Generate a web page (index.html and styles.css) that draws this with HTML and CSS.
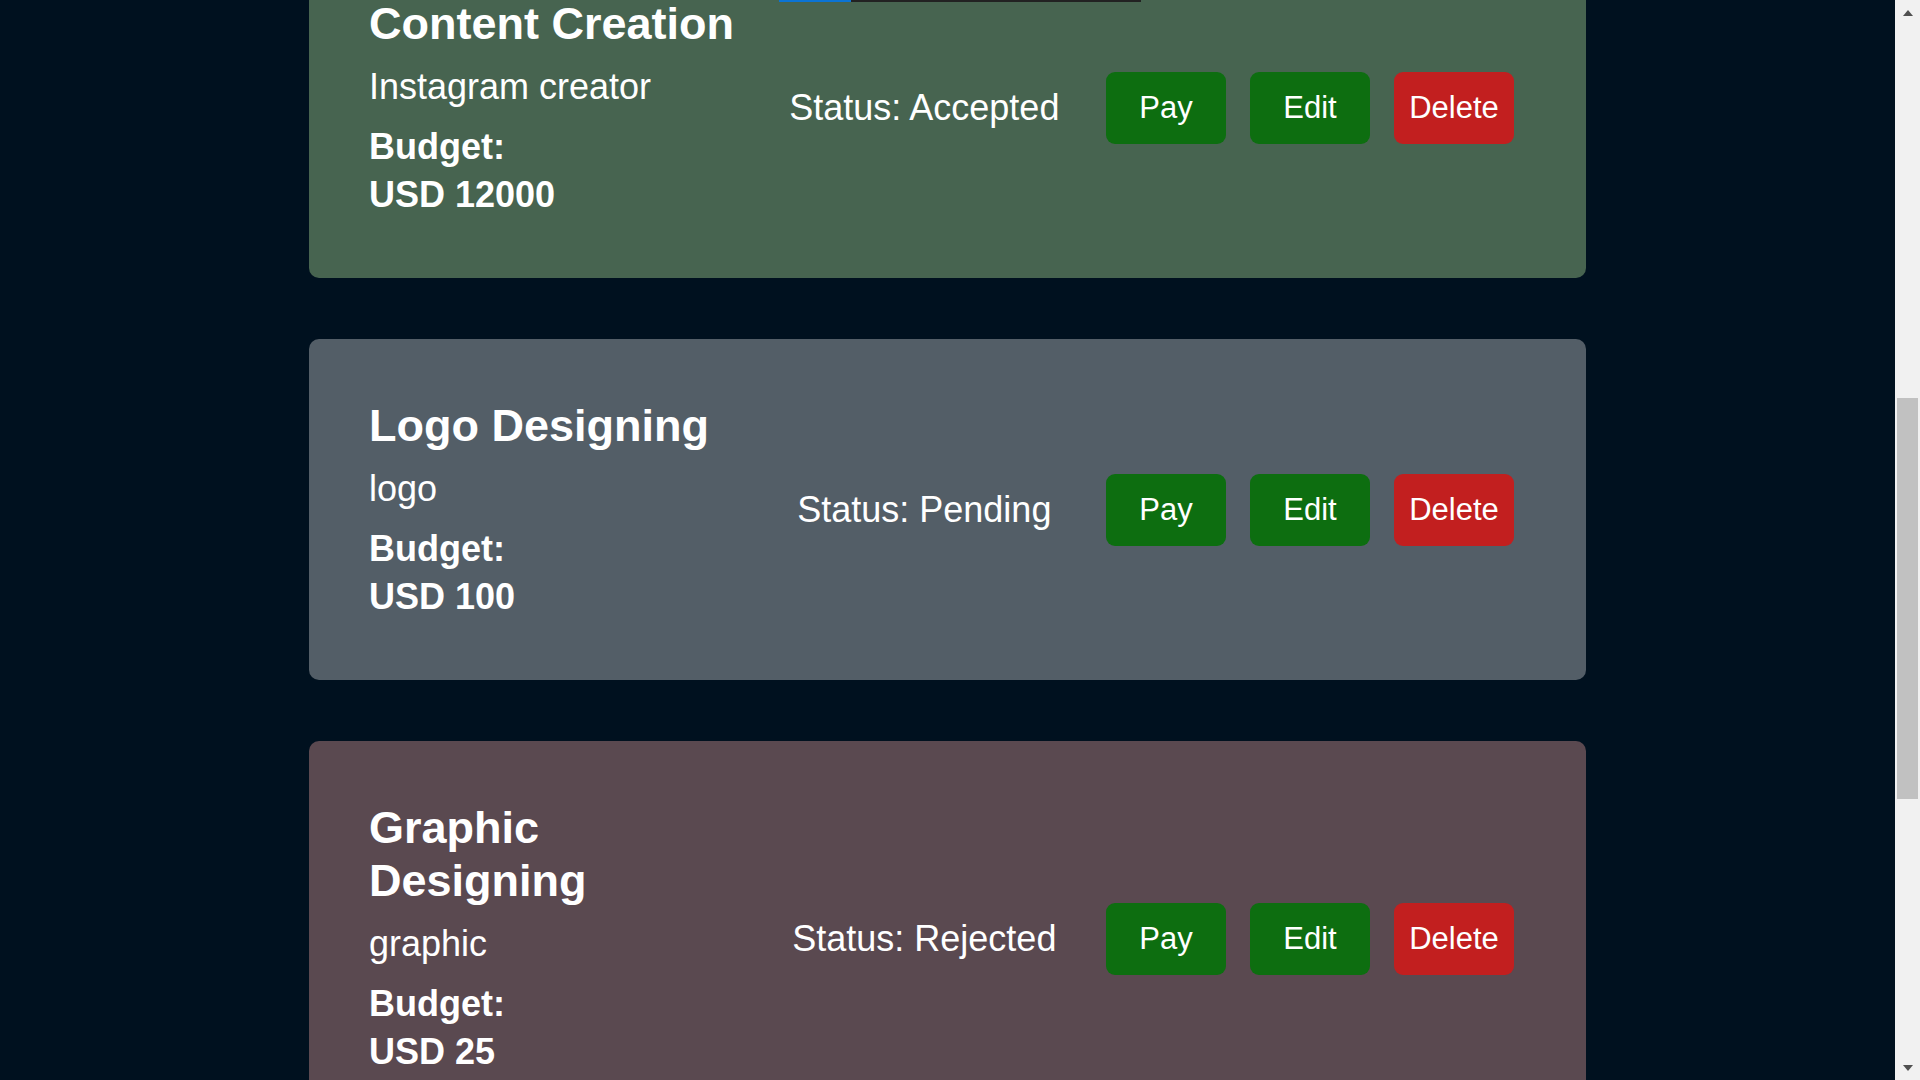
FILE: index.html
```html
<!DOCTYPE html>
<html lang="en">
<head>
<meta charset="utf-8">
<title>Projects</title>
<link rel="stylesheet" href="styles.css">
</head>
<body>
<div class="screen">
  <main class="viewport">
    <div class="topline"><span class="topline-fill"></span></div>
    <section class="list">
      <article class="card card-accepted">
        <div class="info">
          <h2 class="title">Content Creation</h2>
          <p class="desc">Instagram creator</p>
          <p class="budget"><span class="budget-line">Budget:</span><span class="budget-line">USD 12000</span></p>
        </div>
        <p class="status">Status: Accepted</p>
        <div class="actions">
          <button class="btn btn-green">Pay</button>
          <button class="btn btn-green">Edit</button>
          <button class="btn btn-red">Delete</button>
        </div>
      </article>
      <article class="card card-pending">
        <div class="info">
          <h2 class="title">Logo Designing</h2>
          <p class="desc">logo</p>
          <p class="budget"><span class="budget-line">Budget:</span><span class="budget-line">USD 100</span></p>
        </div>
        <p class="status">Status: Pending</p>
        <div class="actions">
          <button class="btn btn-green">Pay</button>
          <button class="btn btn-green">Edit</button>
          <button class="btn btn-red">Delete</button>
        </div>
      </article>
      <article class="card card-rejected">
        <div class="info">
          <h2 class="title">Graphic Designing</h2>
          <p class="desc">graphic</p>
          <p class="budget"><span class="budget-line">Budget:</span><span class="budget-line">USD 25</span></p>
        </div>
        <p class="status">Status: Rejected</p>
        <div class="actions">
          <button class="btn btn-green">Pay</button>
          <button class="btn btn-green">Edit</button>
          <button class="btn btn-red">Delete</button>
        </div>
      </article>
    </section>
  </main>
  <div class="scrollbar">
    <div class="sb-btn"><span class="arrow-up"></span></div>
    <div class="sb-track"><div class="sb-thumb"></div></div>
    <div class="sb-btn"><span class="arrow-down"></span></div>
  </div>
</div>
</body>
</html>
```

FILE: styles.css
```css
* { box-sizing: border-box; }

html, body {
  margin: 0;
  height: 1080px;
  overflow: hidden;
  background: #00111f;
  font-family: "Liberation Sans", Arial, sans-serif;
  color: #ffffff;
}

.screen {
  display: flex;
  height: 1080px;
}

.viewport {
  flex: 1;
  position: relative;
  overflow: hidden;
}

.topline {
  position: absolute;
  top: 0;
  left: 779px;
  width: 362px;
  height: 2px;
  background: #222222;
  display: flex;
  z-index: 2;
}

.topline-fill {
  width: 72px;
  background: #0b74d4;
}

.list {
  margin-top: -63px;
  display: flex;
  flex-direction: column;
  align-items: center;
  gap: 61px;
}

.card {
  width: 1277px;
  border-radius: 10px;
  padding: 60px 60px 59px 60px;
  display: flex;
  align-items: center;
  justify-content: space-between;
}

.card-accepted { background: #476450; }
.card-pending { background: #535e67; }
.card-rejected { background: #5a4950; }

.info {
  flex: 0 0 33.333%;
  display: flex;
  flex-direction: column;
}

.title {
  margin: 0;
  font-size: 45px;
  line-height: 53px;
  font-weight: bold;
}

.desc {
  margin: 14px 0 0 0;
  font-size: 36px;
  line-height: 46px;
}

.budget {
  margin: 13px 0 0 0;
  font-size: 36px;
  line-height: 48px;
  font-weight: bold;
  display: flex;
  flex-direction: column;
}

.status {
  margin: 0;
  font-size: 36px;
  line-height: 46px;
  text-align: center;
}

.actions {
  display: flex;
}

.btn {
  width: 120px;
  height: 72px;
  margin: 0 12px;
  border: none;
  border-radius: 9px;
  color: #ffffff;
  font-family: "Liberation Sans", Arial, sans-serif;
  font-size: 31px;
  padding: 0;
}

.btn-green { background: #0d6e10; }
.btn-red { background: #c21f1f; }

.scrollbar {
  width: 25px;
  background: #f1f1f1;
  display: flex;
  flex-direction: column;
}

.sb-btn {
  height: 25px;
  display: flex;
  align-items: center;
  justify-content: center;
}

.arrow-up {
  width: 0;
  height: 0;
  border-left: 5.5px solid transparent;
  border-right: 5.5px solid transparent;
  border-bottom: 6px solid #505050;
}

.arrow-down {
  width: 0;
  height: 0;
  border-left: 5.5px solid transparent;
  border-right: 5.5px solid transparent;
  border-top: 6px solid #505050;
}

.sb-track {
  flex: 1;
  padding: 373px 2px 0 2px;
}

.sb-thumb {
  height: 401px;
  background: #c1c1c1;
}
```
